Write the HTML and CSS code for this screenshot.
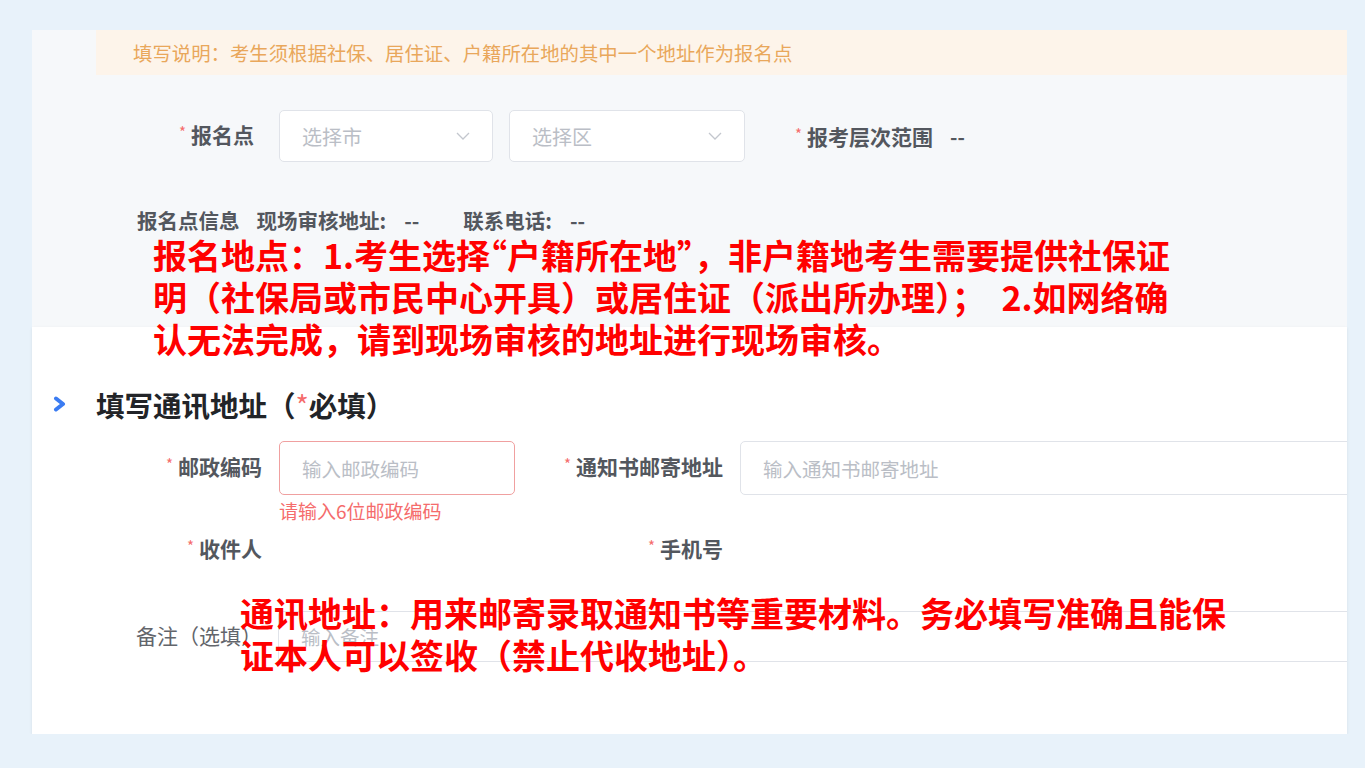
FILE: index.html
```html
<!DOCTYPE html>
<html lang="zh-CN">
<head>
  <meta charset="UTF-8" />
  <meta name="viewport" content="width=device-width, initial-scale=1.0" />
  <title>填写报名信息</title>
  <link rel="stylesheet" href="styles.css">
</head>
<body>
  <div class="slide">

    <!-- 报名点 -->
    <div class="shot shot-top">
      <div class="tip">填写说明：考生须根据社保、居住证、户籍所在地的其中一个地址作为报名点</div>

      <div class="row row-site">
        <div class="lbl-col"><span class="lbl req">报名点</span></div>
        <div class="select select-city">
          <span>选择市</span>
          <svg class="caret" width="14" height="8" viewBox="0 0 14 8"><polyline points="1,1 7,7 13,1" fill="none" stroke="#c3c7ce" stroke-width="1.3"/></svg>
        </div>
        <div class="select select-area">
          <span>选择区</span>
          <svg class="caret" width="14" height="8" viewBox="0 0 14 8"><polyline points="1,1 7,7 13,1" fill="none" stroke="#c3c7ce" stroke-width="1.3"/></svg>
        </div>
        <span class="lbl req level">报考层次范围</span>
        <span class="dash">--</span>
      </div>

      <div class="site-info">
        <span>报名点信息</span>
        <span class="info-item">现场审核地址:<span class="v">--</span></span>
        <span class="info-item wide">联系电话:<span class="v">--</span></span>
      </div>
    </div>

    <!-- 通讯地址 -->
    <div class="shot shot-bottom">
      <h3 class="sec-title">
        <svg class="sec-arrow" width="15" height="16" viewBox="0 0 15 16"><polyline points="4,2.5 11,8 4,13.5" fill="none" stroke="#3b7cf2" stroke-width="4" stroke-linecap="round" stroke-linejoin="round"/></svg>
        <span>填写通讯地址（<em>*</em>必填）</span>
      </h3>

      <div class="row addr-row">
        <div class="lbl-col"><span class="lbl req">邮政编码</span></div>
        <input class="field field-zip" type="text" placeholder="输入邮政编码">
        <div class="lbl-col mid"><span class="lbl req">通知书邮寄地址</span></div>
        <input class="field field-addr" type="text" placeholder="输入通知书邮寄地址">
      </div>
      <div class="err">请输入6位邮政编码</div>

      <div class="row rcpt-row">
        <div class="lbl-col"><span class="lbl req">收件人</span></div>
        <div class="blank"></div>
        <div class="lbl-col mid"><span class="lbl req">手机号</span></div>
      </div>

      <div class="row remark-row">
        <div class="lbl-col plain"><span class="lbl">备注（选填）</span></div>
        <input class="field field-remark" type="text" placeholder="输入备注">
      </div>
    </div>

    <p class="note note-site">报名地点：1.考生选择<span class="q">“</span>户籍所在地<span class="q">”</span>，非户籍地考生需要提供社保证<br>明（社保局或市民中心开具）或居住证（派出所办理）；&nbsp; 2.如网络确<br>认无法完成，请到现场审核的地址进行现场审核。</p>
    <p class="note note-addr">通讯地址：用来邮寄录取通知书等重要材料。务必填写准确且能保<br>证本人可以签收（禁止代收地址）。</p>
  </div>
</body>
</html>
```

FILE: styles.css
```css
:root {
  --bg: #e8f2fa;
  --label: #53575e;
  --holder: #babec6;
  --border: #e0e3e9;
  --danger: #f56c6c;
  --font: "Noto Sans CJK SC", "Noto Sans", sans-serif;
}

* {
  box-sizing: border-box;
  margin: 0;
  padding: 0;
}

body {
  font-family: var(--font);
  background: var(--bg);
  color: var(--label);
}

.slide {
  position: relative;
  width: 1315px;
  margin: 30px 0 0 32px;
}

.shot {
  overflow: hidden;
}

.shot-top {
  height: 297px;
  background: #f6f8fa;
}

.shot-bottom {
  height: 407px;
  padding-top: 59px;
  background: #fff;
  box-shadow: 0 1px 3px rgba(0,0,0,0.08);
}

.tip {
  margin-left: 64px;
  height: 45px;
  line-height: 45px;
  padding-left: 37px;
  background: #fdf4ea;
  color: #e9a75b;
  font-size: 19.4px;
  white-space: nowrap;
}

.row {
  display: flex;
  align-items: center;
}

.lbl {
  font-size: 21px;
  font-weight: 700;
  line-height: 1;
  color: var(--label);
  white-space: nowrap;
}

.req::before {
  content: "*";
  color: var(--danger);
  font-size: 15px;
  font-weight: 400;
  margin-right: 5px;
  vertical-align: 5px;
}

.lbl-col {
  flex: none;
  width: 247px;
  padding-right: 25px;
  text-align: right;
}

/* top form */
.row-site {
  margin-top: 35px;
  height: 52px;
}

.select {
  flex: none;
  display: flex;
  align-items: center;
  justify-content: space-between;
  height: 52px;
  padding: 0 22px 0 22px;
  border: 1px solid var(--border);
  border-radius: 5px;
  background: #fff;
  color: var(--holder);
  font-size: 20px;
}

.select-city { width: 214px; }
.select-area { width: 236px; margin-left: 16px; }

.level {
  margin-left: 50px;
}

.dash {
  margin-left: 17px;
  font-size: 20px;
  font-weight: 700;
}

.site-info {
  display: flex;
  margin-top: 46px;
  padding-left: 105px;
  font-size: 20.5px;
  font-weight: 700;
  line-height: 24px;
  white-space: nowrap;
}

.info-item { margin-left: 17px; }
.info-item.wide { margin-left: 44px; }

.info-item .v {
  margin-left: 18px;
}

/* bottom form */
.sec-title {
  display: flex;
  align-items: center;
  height: 36px;
  font-size: 28.5px;
  font-weight: 700;
  color: #222428;
}

.sec-arrow {
  margin: 0 29px 0 20px;
}

.sec-title em {
  font-style: normal;
  font-weight: 400;
  color: var(--danger);
}

.addr-row {
  margin-top: 19px;
  height: 54px;
}

.addr-row .lbl-col,
.rcpt-row .lbl-col {
  padding-right: 17px;
}

.lbl-col.mid {
  width: 225px;
}

.field {
  flex: none;
  height: 54px;
  padding: 0 22px;
  border: 1px solid var(--border);
  border-radius: 5px;
  background: #fff;
  font-family: var(--font);
  font-size: 19.5px;
  color: var(--label);
  outline: none;
}

.field::placeholder {
  color: var(--holder);
}

.field-zip {
  width: 236px;
  border: 1.5px solid #f0a0a0;
}

.field-addr {
  width: 640px;
}

.err {
  margin: 6px 0 0 247px;
  font-size: 19px;
  line-height: 20px;
  color: var(--danger);
}

.rcpt-row {
  margin-top: 9px;
  height: 40px;
}

.blank {
  width: 236px;
}

.remark-row {
  margin-top: 41px;
  height: 51px;
}

.lbl-col.plain {
  width: 246px;
  padding-right: 16px;
}

.plain .lbl {
  font-weight: 400;
  color: #62656b;
}

.field-remark {
  width: 1100px;
  height: 51px;
  border-radius: 4px;
}

/* red notes laid over the screenshot */
.note {
  position: absolute;
  color: #ff0000;
  font-size: 34px;
  font-weight: 700;
  line-height: 42px;
  white-space: nowrap;
}

.note .q {
  font-feature-settings: "halt";
}

.note-site {
  left: 121px;
  top: 204px;
}

.note-addr {
  left: 208px;
  top: 562px;
}
```
